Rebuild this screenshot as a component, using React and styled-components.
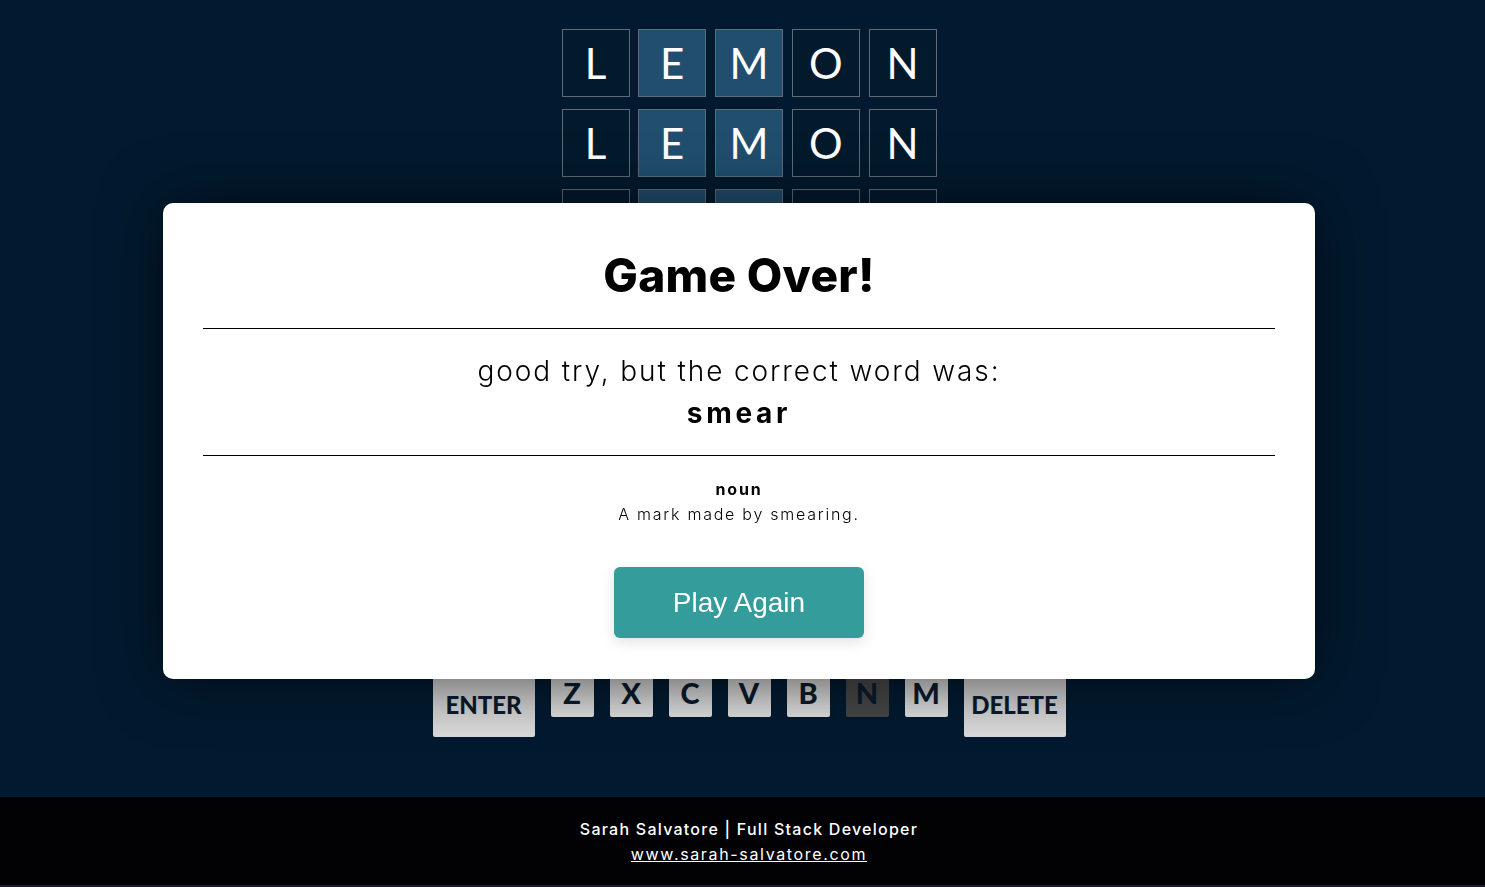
import React from "react"
import styled, {createGlobalStyle} from "styled-components"

const GlobalStyle = createGlobalStyle`
    html, body {
        margin: 0;
        padding: 0;
        background: #021a2f;
        overflow: hidden;
        font-family: Inter, "Noto Sans", sans-serif;
    }
    * {
        box-sizing: border-box;
    }
`

const Page = styled.div`
    display: flex;
    flex-direction: column;
    height: 887px;
    padding-left: 13px;
`

const Main = styled.main`
    flex: 1;
    display: flex;
    flex-direction: column;
    align-items: center;
    padding-top: 29px;
`

const Board = styled.div`
    display: grid;
    grid-template-columns: repeat(5, 68px);
    grid-auto-rows: 68px;
    gap: 12px 8.75px;
`

const Tile = styled.div`
    display: flex;
    align-items: center;
    justify-content: center;
    border: 1px solid #5f6b76;
    background: ${({hit}) => hit ? "#214e6f" : "#031a2d"};
    color: #fff;
    font-family: Lato, sans-serif;
    font-size: 42px;
    font-weight: 400;
`

const Keyboard = styled.div`
    display: flex;
    flex-direction: column;
    align-items: center;
    gap: 14px;
    margin-top: 54px;
`

const KeyRow = styled.div`
    display: flex;
    align-items: flex-start;
    gap: 16px;
`

const Key = styled.div`
    display: flex;
    align-items: center;
    justify-content: center;
    width: ${({wide}) => wide ? "102px" : "43px"};
    height: ${({wide}) => wide ? "66px" : "46px"};
    padding-bottom: ${({wide}) => wide ? "0" : "3px"};
    border-radius: 2px;
    background: ${({used}) => used ? "#444444" : "linear-gradient(#bdbdbd, #dadada)"};
    color: #0b1a2a;
    font-family: Lato, sans-serif;
    font-weight: 900;
    font-size: ${({wide}) => wide ? "24px" : "29px"};
`

const Footer = styled.footer`
    height: 90px;
    margin-left: -13px;
    background: #020204;
    border-bottom: 2px solid #1f1b2b;
    display: flex;
    flex-direction: column;
    align-items: center;
    justify-content: center;
    padding: 2px 0 0 13px;
    color: #fff;
    font-size: 16px;
    letter-spacing: 1.25px;
    line-height: 25px;
    font-weight: 500;
`

const FooterLink = styled.a`
    color: #fff;
    text-decoration: underline;
    font-weight: 400;
    letter-spacing: 1.65px;
`

const Modal = styled.div`
    position: fixed;
    top: 203px;
    left: 163px;
    width: 1152px;
    background: #fff;
    border-radius: 10px;
    box-shadow: 0 0 60px rgba(0, 0, 0, 0.55);
    padding: 45px 40px 41px;
    display: flex;
    flex-direction: column;
    align-items: center;
    text-align: center;
    color: #000;
`

const Title = styled.h1`
    margin: 0;
    font-size: 46px;
    line-height: 54px;
    font-weight: 800;
    letter-spacing: 0.3px;
`

const Divider = styled.hr`
    width: 100%;
    margin: ${({top}) => top}px 0 0;
    border: none;
    border-top: 1px solid #000;
`

const Message = styled.p`
    margin: 21px 0 0;
    font-size: 28px;
    line-height: 42px;
    font-weight: 300;
    letter-spacing: 1.9px;
`

const Word = styled.p`
    margin: 0 0 21px;
    font-size: 28px;
    line-height: 42px;
    font-weight: 700;
    letter-spacing: 3.7px;
`

const Part = styled.p`
    margin: 21px 0 0;
    font-size: 16px;
    line-height: 24px;
    font-weight: 700;
    letter-spacing: 1.8px;
`

const Definition = styled.p`
    margin: 1px 0 0;
    font-size: 16px;
    line-height: 24px;
    font-weight: 300;
    letter-spacing: 1.75px;
`

const PlayButton = styled.button`
    margin-top: 41px;
    width: 250px;
    height: 71px;
    border: none;
    border-radius: 6px;
    background: #359c9c;
    color: #fff;
    font-family: "Liberation Sans", Arial, sans-serif;
    font-size: 28px;
    box-shadow: 0 4px 14px rgba(0, 0, 0, 0.12);
    cursor: pointer;
`

const guesses = ["LEMON", "LEMON", "LEMON", "", "", ""]
const hits = [1, 2]
const rows = ["QWERTYUIOP", "ASDFGHJKL"]

export default function App() {
    return (
        <>
            <GlobalStyle />
            <Page>
                <Main>
                    <Board>
                        {guesses.map((g, r) =>
                            [0, 1, 2, 3, 4].map(i => (
                                <Tile key={r + "-" + i} hit={g && hits.includes(i)}>
                                    {g[i] || ""}
                                </Tile>
                            ))
                        )}
                    </Board>
                    <Keyboard>
                        {rows.map(row => (
                            <KeyRow key={row}>
                                {row.split("").map(k => <Key key={k}>{k}</Key>)}
                            </KeyRow>
                        ))}
                        <KeyRow>
                            <Key wide>ENTER</Key>
                            {"ZXCVBNM".split("").map(k => (
                                <Key key={k} used={k == "N"}>{k}</Key>
                            ))}
                            <Key wide>DELETE</Key>
                        </KeyRow>
                    </Keyboard>
                </Main>
                <Footer>
                    <div>Sarah Salvatore | Full Stack Developer</div>
                    <FooterLink href="#">www.sarah-salvatore.com</FooterLink>
                </Footer>
            </Page>
            <Modal>
                <Title>Game Over!</Title>
                <Divider top={26} />
                <Message>good try, but the correct word was:</Message>
                <Word>smear</Word>
                <Divider top={0} />
                <Part>noun</Part>
                <Definition>A mark made by smearing.</Definition>
                <PlayButton>Play Again</PlayButton>
            </Modal>
        </>
    )
}
